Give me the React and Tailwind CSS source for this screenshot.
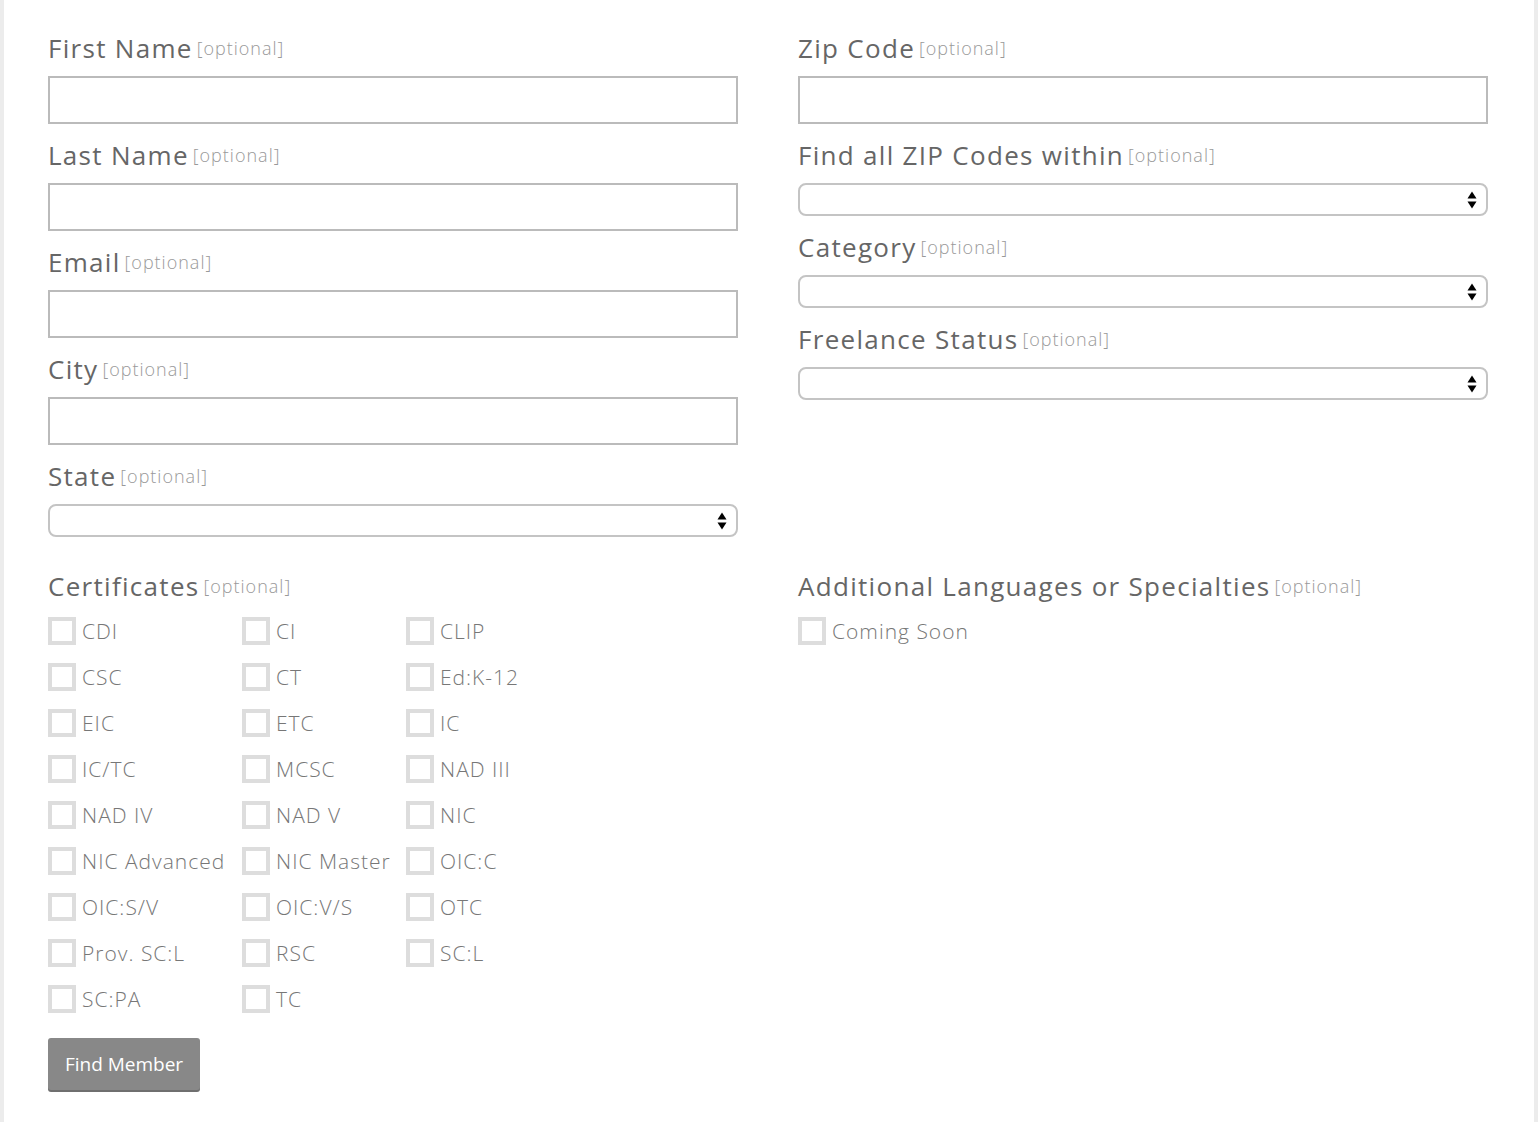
import React from "react";

const font = { fontFamily: '"Open Sans", "Noto Sans", sans-serif' };

function LabelRow({ text, className = "mb-2" }) {
  return (
    <div className={"h-[39px] leading-[39px] whitespace-nowrap " + className}>
      <span className="text-[26px] text-[#666] tracking-[1.3px]">{text}</span>
      <span className="ml-1 text-[18px] text-[#999] font-light tracking-[1px] align-[3px]">[optional]</span>
    </div>
  );
}

function TextField({ label, first }) {
  return (
    <div className={first ? "" : "mt-3"}>
      <LabelRow text={label} />
      <input type="text" className="block w-full h-[48px] border-2 border-[#bbb] bg-white outline-none" />
    </div>
  );
}

function Arrows() {
  return (
    <svg width="10" height="18" viewBox="0 0 10 18" className="absolute right-[9px] top-1/2 -translate-y-1/2 pointer-events-none">
      <path d="M5 0.5 L9.5 7.5 L0.5 7.5 Z" fill="#000" />
      <path d="M0.5 10.5 L9.5 10.5 L5 17.5 Z" fill="#000" />
    </svg>
  );
}

function SelectField({ label }) {
  return (
    <div className="mt-3">
      <LabelRow text={label} />
      <div className="relative h-[33px] w-full border-2 border-[#c4c4c4] rounded-[8px] bg-white">
        <Arrows />
      </div>
    </div>
  );
}

function Check({ label }) {
  return (
    <div className="flex items-center h-[28px] gap-1.5 whitespace-nowrap">
      <span className="w-[28px] h-[28px] border-[4px] border-[#ddd] bg-white shrink-0" />
      <span className="text-[21px] font-light text-[#777] tracking-[1px] translate-y-[1px]">{label}</span>
    </div>
  );
}

const certs = [
  "CDI", "CI", "CLIP",
  "CSC", "CT", "Ed:K-12",
  "EIC", "ETC", "IC",
  "IC/TC", "MCSC", "NAD III",
  "NAD IV", "NAD V", "NIC",
  "NIC Advanced", "NIC Master", "OIC:C",
  "OIC:S/V", "OIC:V/S", "OTC",
  "Prov. SC:L", "RSC", "SC:L",
  "SC:PA", "TC",
];

export default function App() {
  return (
    <div className="min-h-[1122px] bg-[#ececec] px-[4px]" style={font}>
      <div className="min-h-[1122px] bg-white pl-[44px] pr-[46px] pt-[29px] pb-8">
        <div className="grid grid-cols-2 gap-x-[60px] items-start">
          <div>
            <TextField label="First Name" first />
            <TextField label="Last Name" />
            <TextField label="Email" />
            <TextField label="City" />
            <SelectField label="State" />
          </div>
          <div>
            <TextField label="Zip Code" first />
            <SelectField label="Find all ZIP Codes within" />
            <SelectField label="Category" />
            <SelectField label="Freelance Status" />
          </div>
        </div>
        <div className="grid grid-cols-2 gap-x-[60px] items-start mt-[30px]">
          <div>
            <LabelRow text="Certificates" className="mb-[11px]" />
            <div className="grid grid-cols-[194px_164px_auto] gap-y-[18px]">
              {certs.map((c) => (
                <Check key={c} label={c} />
              ))}
            </div>
            <button className="mt-[25px] w-[152px] h-[52px] bg-[#888] text-white text-[19px] rounded-[3px] shadow-[0_2px_0_#6f6f6f]">
              Find Member
            </button>
          </div>
          <div>
            <LabelRow text="Additional Languages or Specialties" className="mb-[11px]" />
            <Check label="Coming Soon" />
          </div>
        </div>
      </div>
    </div>
  );
}
